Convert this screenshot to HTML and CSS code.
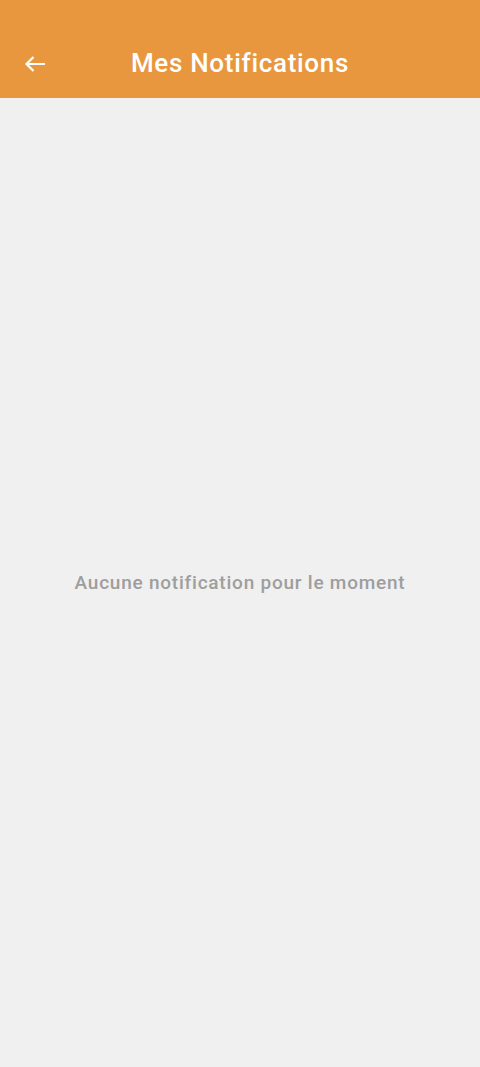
FILE: index.html
```html
<!DOCTYPE html>
<html lang='fr'>
<head>
    <meta charset='UTF-8'>
    <meta name='viewport' content='width=device-width, initial-scale=1.0'>
    <title>Mes Notifications</title>
    <link rel="stylesheet" href="styles.css">
</head>
<body>
    <div id='app'>
        <header>
            <div class='toolbar'>
                <button class='back' aria-label='Retour'>
                    <svg width='24' height='24' viewBox='0 0 24 24'>
                        <path d='M22 12H3.5M10.5 5L3.5 12l7 7' fill='none' stroke='white' stroke-width='2.2'/>
                    </svg>
                </button>
                <h1>Mes Notifications</h1>
            </div>
        </header>
        <main>
            <p class='empty'>Aucune notification pour le moment</p>
        </main>
    </div>
</body>
</html>
```

FILE: styles.css
```css
html, body {
    margin: 0; padding: 0;
    height: 100%; width: 100%;
    font-family: Roboto, "Noto Sans", sans-serif;
    background: #f0f0f0;
}
#app {
    display: flex; flex-direction: column;
    height: 100%;
}
header {
    background: #e8973e;
    padding-top: 28px;
}
.toolbar {
    height: 70px;
    display: flex; align-items: center;
}
.back {
    border: 0; background: none; padding: 0;
    margin: 2px 0 0 23px;
    width: 24px; height: 24px;
    display: flex;
}
h1 {
    flex: 1;
    margin: 0 0 0 -47px;
    text-align: center;
    color: white;
    font-size: 26px; font-weight: 500;
    letter-spacing: 0.7px;
}
main {
    flex: 1;
    display: flex; align-items: center; justify-content: center;
}
.empty {
    margin: 0;
    color: #9e9e9e;
    font-size: 19px; font-weight: 500;
    letter-spacing: 0.77px;
}
```
